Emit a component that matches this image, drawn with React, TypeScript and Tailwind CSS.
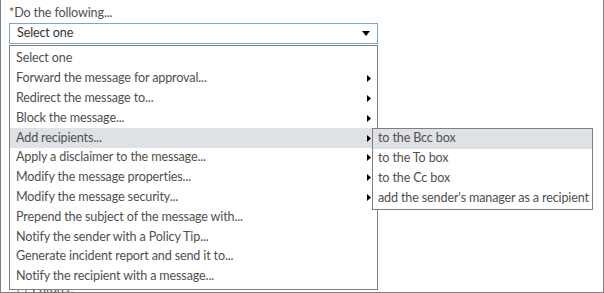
const items = [
  { label: "Select one", sub: false },
  { label: "Forward the message for approval...", sub: true },
  { label: "Redirect the message to...", sub: true },
  { label: "Block the message...", sub: true },
  { label: "Add recipients...", sub: true, active: true },
  { label: "Apply a disclaimer to the message...", sub: true },
  { label: "Modify the message properties...", sub: true },
  { label: "Modify the message security...", sub: true },
  { label: "Prepend the subject of the message with...", sub: false },
  { label: "Notify the sender with a Policy Tip...", sub: false },
  { label: "Generate incident report and send it to...", sub: false },
  { label: "Notify the recipient with a message...", sub: false },
];

const subItems = [
  "to the Bcc box",
  "to the To box",
  "to the Cc box",
  "add the sender's manager as a recipient",
];

function RightArrow() {
  return (
    <svg width="4" height="7" viewBox="0 0 4 7" className="shrink-0">
      <path d="M0 0 L4 3.5 L0 7 Z" fill="#000" />
    </svg>
  );
}

export default function App() {
  return (
    <div
      className="relative h-[293px] w-[604px] overflow-hidden border-x border-b border-[#7f7f7f] bg-white text-[12.6px] tracking-[-0.15px] text-[#505050]"
      style={{ fontFamily: 'Lato, "Open Sans", Arial, sans-serif' }}
    >
      <div className="px-2 pt-[3px]">
        <div className="h-[20px] leading-[20px]">*Do the following...</div>
        <div className="flex h-[21px] w-[369px] items-center justify-between border border-[#7aa7cf] pl-[7px] pr-[7px] text-[#333]">
          <span>Select one</span>
          <svg width="8" height="5" viewBox="0 0 8 5">
            <path d="M0 0 H8 L4 5 Z" fill="#000" />
          </svg>
        </div>
        {/* content behind the open menu */}
        <div className="mt-[237px] flex h-[16px] items-center gap-[5px] pl-[8px] text-[#555]">
          <span className="inline-block size-[10px] rounded-full border border-[#666]" />
          <span>Enforce</span>
        </div>
      </div>

      {/* open dropdown */}
      <div className="absolute left-2 top-[45px] w-[369px] border border-[#7f7f7f] bg-white pt-[3px] pb-[2px]">
        {items.map((it) => (
          <div
            key={it.label}
            className={`flex h-[19.8px] items-center justify-between pl-[6px] pr-[6px] ${it.active ? "bg-[#dee1e6]" : ""}`}
          >
            <span className="whitespace-nowrap">{it.label}</span>
            {it.sub ? <RightArrow /> : null}
          </div>
        ))}
      </div>

      {/* submenu */}
      <div className="absolute left-[371px] top-[128px] w-[221px] border border-[#7f7f7f] bg-white pb-[1px]">
        {subItems.map((s, i) => (
          <div
            key={s}
            className={`flex h-[19.8px] items-center pl-[5px] whitespace-nowrap ${i === 0 ? "bg-[#dee1e6]" : ""}`}
          >
            {s}
          </div>
        ))}
      </div>
    </div>
  );
}
